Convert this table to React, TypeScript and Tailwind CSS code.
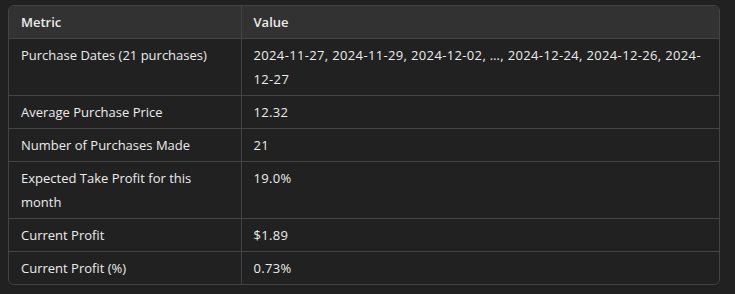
const rows: [string, string][] = [
  [
    'Purchase Dates (21 purchases)',
    '2024-11-27, 2024-11-29, 2024-12-02, …, 2024-12-24, 2024-12-26, 2024-12-27',
  ],
  ['Average Purchase Price', '12.32'],
  ['Number of Purchases Made', '21'],
  ['Expected Take Profit for this month', '19.0%'],
  ['Current Profit', '$1.89'],
  ['Current Profit (%)', '0.73%'],
];

export default function App() {
  return (
    <div className="min-h-screen bg-[#212121] pt-[5px] pl-2 pr-[15px] font-['Segoe_UI','Open_Sans',sans-serif] text-[13px] leading-6 text-[#ececec]">
      <div className="overflow-hidden rounded-md border border-[#444444]">
        <table className="w-full border-collapse">
          <thead>
            <tr className="bg-[#323232]">
              <th className="w-[232px] border-b border-r border-[#444444] px-3 py-[4px] text-left font-semibold">Metric</th>
              <th className="border-b border-[#444444] px-3 py-[4px] text-left font-semibold">Value</th>
            </tr>
          </thead>
          <tbody>
            {rows.map(([k, v], i) => (
              <tr key={k}>
                <td className={`border-r border-[#444444] px-3 py-[4px] align-top ${i < rows.length - 1 ? 'border-b' : ''}`}>{k}</td>
                <td className={`border-[#444444] px-3 py-[4px] align-top tracking-[0.35px] ${i < rows.length - 1 ? 'border-b' : ''}`}>{v}</td>
              </tr>
            ))}
          </tbody>
        </table>
      </div>
    </div>
  );
}
